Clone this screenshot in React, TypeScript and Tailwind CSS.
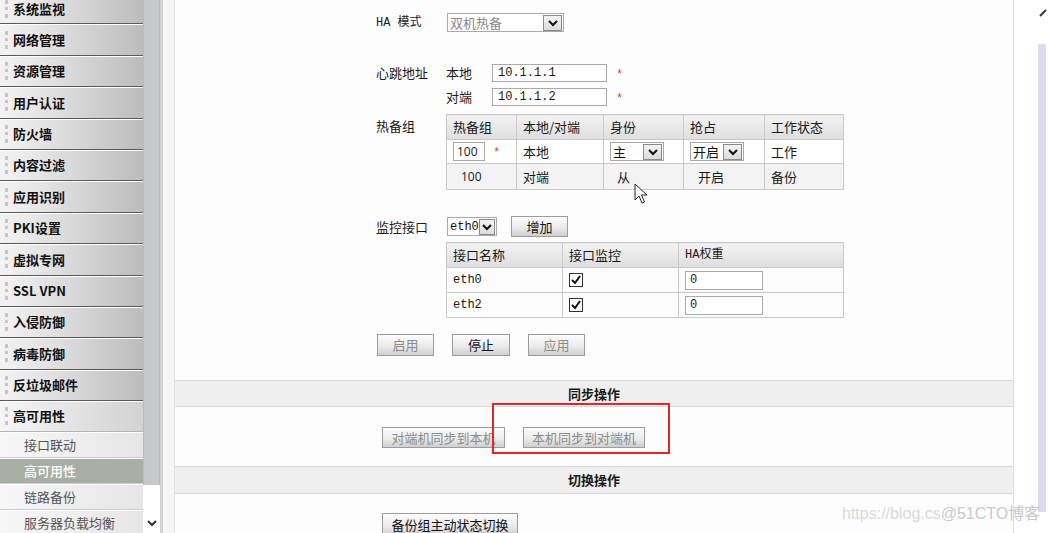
import * as React from 'react';

const menu = ['系统监视', '网络管理', '资源管理', '用户认证', '防火墙', '内容过滤', '应用识别', 'PKI设置', '虚拟专网', 'SSL VPN', '入侵防御', '病毒防御', '反垃圾邮件'];
const subMenu = ['接口联动', '高可用性', '链路备份', '服务器负载均衡'];

function Chevron({ color = '#111' }: { color?: string }) {
    return (
        <svg width="12" height="10" viewBox="0 0 12 10">
            <polyline points="2,3 6,7 10,3" fill="none" stroke={color} strokeWidth="2" />
        </svg>
    );
}

function Select({ w, text, textClass = 'text-[#111]', mono = false }: { w: string; text: string; textClass?: string; mono?: boolean }) {
    return (
        <div className={`${w} h-[19px] flex items-center border border-[#a9a9a9] bg-white`}>
            <span className={`flex-1 pl-[2px] leading-none ${textClass} ${mono ? "font-['Liberation_Mono','Noto_Sans_CJK_SC',monospace] text-[12px]" : ''}`}>{text}</span>
            <div className="w-[19px] h-[16px] mr-[1px] flex items-center justify-center border border-[#8a8a8a] bg-[linear-gradient(#f4f4f4,#dcdcdc)]">
                <Chevron />
            </div>
        </div>
    );
}

function Btn({ w, h = 'h-[22px]', text, dim = false }: { w: string; h?: string; text: string; dim?: boolean }) {
    return (
        <div className={`${w} ${h} flex items-center justify-center border border-[#9c9c9c] bg-[linear-gradient(#fdfdfd,#e9e9e9_60%,#cfcfcf)] shadow-[inset_0_1px_0_#fff] ${dim ? 'text-[#8c8c8c]' : 'text-[#111]'}`}>
            {text}
        </div>
    );
}

function Star() {
    return <span className="text-[#e53b3b] text-[12px] font-['Liberation_Mono',monospace]">*</span>;
}

function CheckBox() {
    return (
        <div className="w-[14px] h-[14px] border border-[#333] bg-white flex items-center justify-center">
            <svg width="12" height="12" viewBox="0 0 12 12">
                <polyline points="2,6 5,9 10,2" fill="none" stroke="#111" strokeWidth="2" />
            </svg>
        </div>
    );
}

const th = 'border border-[#c9c9c9] bg-[linear-gradient(#f3f3f3,#dedede)] text-left font-normal pl-[6px]';
const td = 'border border-[#c9c9c9] pl-[6px]';

export default function App() {
    return (
        <div className="w-[1048px] h-[533px] overflow-hidden flex items-start relative bg-white text-[13px] text-[#1a1a1a] font-['Noto_Sans_CJK_SC','Noto_Sans',sans-serif]">
            {/* sidebar */}
            <div className="w-[143px] shrink-0 flex flex-col">
                <div className="-mt-[6px]">
                    {menu.map((m, i) => (
                        <div key={m} className={`${i === 0 ? 'h-[30.4px]' : 'h-[31.4px]'} flex items-center border-b border-[#5a5a5a] shadow-[inset_0_1px_0_#fff] bg-[linear-gradient(to_right,#f4f4f4,#d9d9d9_50%,#bcbcbc)]`}>
                            <div className="ml-[5px] h-[18px] border-l-[3px] border-dotted border-[#c6c6c6]" />
                            <span className="ml-[5px] font-bold text-[13px] text-[#111]">{m}</span>
                        </div>
                    ))}
                    <div className="h-[31px] flex items-center border-b border-[#b4b4b4] shadow-[inset_0_1px_0_#fff] bg-[linear-gradient(to_right,#f6f6f6,#e4e4e4_50%,#d2d2d2)]">
                        <div className="ml-[5px] h-[18px] border-l-[3px] border-dotted border-[#c6c6c6]" />
                        <span className="ml-[5px] font-bold text-[13px] text-[#111]">高可用性</span>
                    </div>
                    {subMenu.map((s, i) => (
                        <div key={s} className={`h-[26px] flex items-center border-b border-[#cdcdcd] shadow-[inset_0_1px_0_#fff] ${i === 1 ? 'bg-[#a8aea5] text-white font-medium' : 'bg-[linear-gradient(to_right,#f7f7f7,#e6e6e6)] text-[#555]'}`}>
                            <span className="ml-[24px] text-[13px]">{s}</span>
                        </div>
                    ))}
                </div>
            </div>
            {/* sidebar scrollbar */}
            <div className="w-[17px] h-[533px] shrink-0 flex flex-col">
                <div className="h-[485px] bg-[#c7c8ca] border-x border-[#b9babc]" />
                <div className="flex-1 bg-white flex items-end justify-center pb-[5px]">
                    <Chevron color="#333" />
                </div>
            </div>
            <div className="w-[3px] h-[533px] shrink-0 bg-[#d3d3d3]" />
            <div className="w-[11px] h-[533px] shrink-0 bg-[#f6f6f6]" />

            {/* content */}
            <div className="w-[840px] h-[533px] shrink-0 border-x border-[#e0e0e0] bg-[#fdfdfd] flex flex-col">
                <div className="pl-[201px] pt-[13px] flex flex-col h-[380px] shrink-0">
                    {/* HA mode */}
                    <div className="flex items-center h-[19px]">
                        <span className="w-[71px] font-['Liberation_Mono','Noto_Sans_CJK_SC',monospace] text-[12px]">HA 模式</span>
                        <Select w="w-[117px]" text="双机热备" textClass="text-[#8a8a8a] text-[13px]" />
                    </div>

                    {/* heartbeat */}
                    <div className="mt-[32px] flex items-center h-[18px]">
                        <span className="w-[70px]">心跳地址</span>
                        <span className="w-[46px]">本地</span>
                        <div className="w-[115px] h-[18px] border border-[#a9a9a9] bg-white flex items-center pl-[5px] font-['Liberation_Mono',monospace] text-[12px]">10.1.1.1</div>
                        <span className="ml-[9px]"><Star /></span>
                    </div>
                    <div className="mt-[6px] flex items-center h-[18px]">
                        <span className="w-[70px]" />
                        <span className="w-[46px]">对端</span>
                        <div className="w-[115px] h-[18px] border border-[#a9a9a9] bg-white flex items-center pl-[5px] font-['Liberation_Mono',monospace] text-[12px]">10.1.1.2</div>
                        <span className="ml-[9px]"><Star /></span>
                    </div>

                    {/* hot backup group */}
                    <div className="mt-[8px] flex items-start">
                        <span className="w-[70px] pt-[2px]">热备组</span>
                        <table className="w-[397px] border-collapse table-fixed text-[13px]">
                            <colgroup>
                                <col className="w-[70px]" />
                                <col className="w-[87px]" />
                                <col className="w-[80px]" />
                                <col className="w-[81px]" />
                                <col className="w-[79px]" />
                            </colgroup>
                            <thead>
                                <tr className="h-[25px]">
                                    <th className={th}>热备组</th>
                                    <th className={th}>本地/对端</th>
                                    <th className={th}>身份</th>
                                    <th className={th}>抢占</th>
                                    <th className={th}>工作状态</th>
                                </tr>
                            </thead>
                            <tbody>
                                <tr className="h-[24px] bg-white">
                                    <td className={td}>
                                        <div className="flex items-center">
                                            <div className="w-[32px] h-[19px] border border-[#a9a9a9] bg-white flex items-center pl-[3px] font-['Open_Sans',sans-serif] text-[12px]">100</div>
                                            <span className="ml-[8px]"><Star /></span>
                                        </div>
                                    </td>
                                    <td className={td}>本地</td>
                                    <td className={td}><Select w="w-[54px]" text="主" /></td>
                                    <td className={td}><Select w="w-[54px]" text="开启" /></td>
                                    <td className={td}>工作</td>
                                </tr>
                                <tr className="h-[26px] bg-[#f3f3f3]">
                                    <td className={`${td} !pl-[14px] font-['Open_Sans',sans-serif] text-[12px]`}>100</td>
                                    <td className={td}>对端</td>
                                    <td className={`${td} !pl-[13px]`}>从</td>
                                    <td className={`${td} !pl-[14px]`}>开启</td>
                                    <td className={td}>备份</td>
                                </tr>
                            </tbody>
                        </table>
                    </div>

                    {/* monitor interface */}
                    <div className="mt-[26px] flex items-center h-[21px]">
                        <span className="w-[71px]">监控接口</span>
                        <Select w="w-[50px]" text="eth0" mono />
                        <div className="ml-[14px]"><Btn w="w-[57px]" h="h-[21px]" text="增加" /></div>
                    </div>
                    <div className="mt-[5px] ml-[70px]">
                        <table className="w-[397px] border-collapse table-fixed text-[13px]">
                            <colgroup>
                                <col className="w-[116px]" />
                                <col className="w-[116px]" />
                                <col className="w-[165px]" />
                            </colgroup>
                            <thead>
                                <tr className="h-[25px]">
                                    <th className={th}>接口名称</th>
                                    <th className={th}>接口监控</th>
                                    <th className={`${th} font-['Liberation_Mono','Noto_Sans_CJK_SC',monospace] text-[12px]`}>HA权重</th>
                                </tr>
                            </thead>
                            <tbody>
                                {['eth0', 'eth2'].map((e) => (
                                    <tr key={e} className="h-[25px] bg-[#fcfcfc]">
                                        <td className={`${td} font-['Liberation_Mono',monospace] text-[12px]`}>{e}</td>
                                        <td className={td}><CheckBox /></td>
                                        <td className={td}>
                                            <div className="w-[78px] h-[19px] border border-[#a9a9a9] bg-white flex items-center pl-[4px] font-['Liberation_Mono',monospace] text-[12px]">0</div>
                                        </td>
                                    </tr>
                                ))}
                            </tbody>
                        </table>
                    </div>

                    {/* actions */}
                    <div className="mt-[16px] ml-[1px] flex gap-[18px]">
                        <Btn w="w-[57px]" text="启用" dim />
                        <Btn w="w-[58px]" text="停止" />
                        <Btn w="w-[57px]" text="应用" dim />
                    </div>
                </div>

                {/* sync */}
                <div className="h-[27px] shrink-0 border-y border-[#d9d9d9] bg-[#efefef] flex items-center justify-center font-bold">同步操作</div>
                <div className="h-[59px] shrink-0 pt-[20px] pl-[207px] flex gap-[18px]">
                    <Btn w="w-[123px]" h="h-[21px]" text="对端机同步到本机" dim />
                    <Btn w="w-[122px]" h="h-[21px]" text="本机同步到对端机" dim />
                </div>
                <div className="h-[28px] shrink-0 border-y border-[#d9d9d9] bg-[#efefef] flex items-center justify-center font-bold">切换操作</div>
                <div className="pt-[19px] pl-[207px]">
                    <Btn w="w-[136px]" h="h-[23px]" text="备份组主动状态切换" />
                </div>
            </div>

            {/* right edge */}
            <div className="w-[24px] shrink-0" />
            <div className="w-[8px] mt-[44px] h-[468px] shrink-0 bg-[#dcdcee]" />

            {/* overlays */}
            <div className="absolute left-[492px] top-[403px] w-[178px] h-[51px] border-2 border-[#e32626]" />
            <svg className="absolute left-[634px] top-[183px]" width="16" height="22" viewBox="0 0 16 22">
                <path d="M1 1 L1 17 L5 13 L8 20 L10.5 19 L7.5 12 L13 12 Z" fill="#fff" stroke="#222" strokeWidth="1" />
            </svg>
            <svg className="absolute left-[1039px] top-[9px]" width="8" height="8" viewBox="0 0 8 8">
                <path d="M1 7 L7 1" stroke="#333" strokeWidth="2" />
            </svg>
            <div className="absolute left-[842px] top-[506px] text-[16px] whitespace-nowrap font-['Liberation_Sans','Noto_Sans_CJK_SC',sans-serif] leading-none">
                <span className="text-[#dadada]">https://blog.cs</span>
                <span className="text-[#c9c9c9]">@51CTO博客</span>
            </div>
        </div>
    );
}
